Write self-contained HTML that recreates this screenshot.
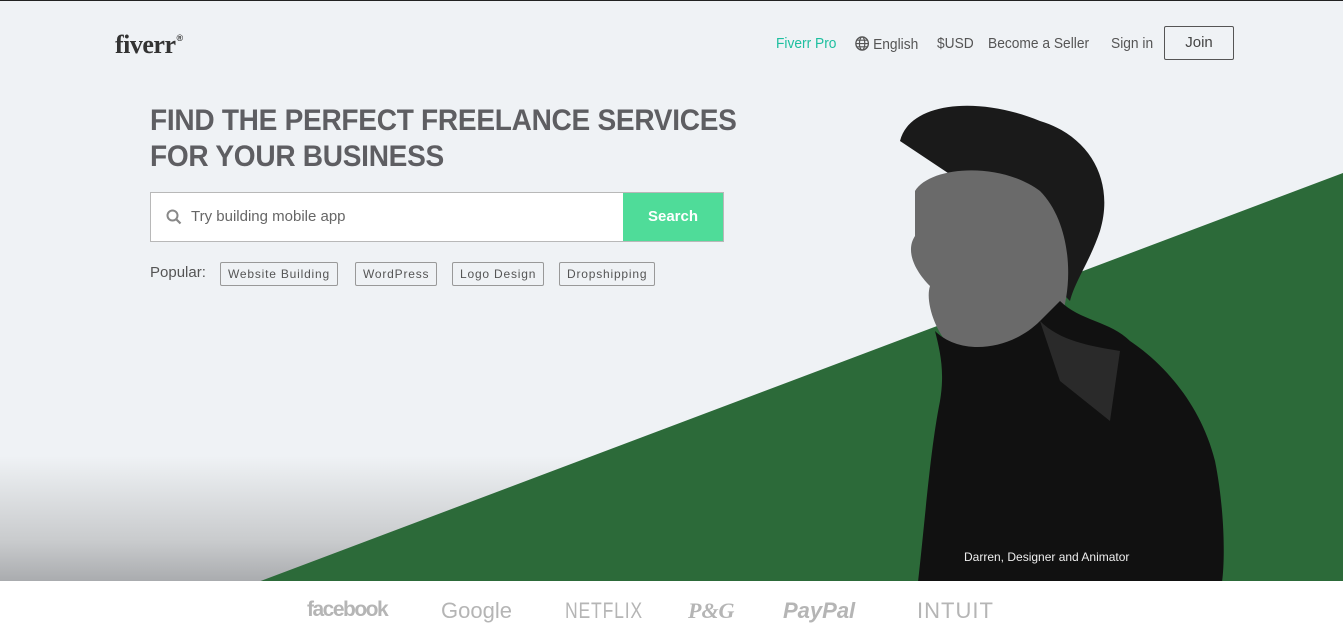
<!DOCTYPE html>
<html><head><meta charset="utf-8"><style>
*{margin:0;padding:0;box-sizing:border-box}
body{width:1343px;height:624px;overflow:hidden;font-family:"Liberation Sans",sans-serif;background:#fff}
.hero{position:absolute;left:0;top:0;width:1343px;height:581px;background:linear-gradient(#eff2f5 0,#eff2f5 455px,#c9cbcd 540px,#a9abae 581px);border-top:1px solid #222;overflow:hidden}
svg.bg{position:absolute;left:0;top:0}
.logo{position:absolute;left:115px;top:29px;font-family:"Liberation Serif",serif;font-weight:bold;font-size:26px;color:#333;letter-spacing:-0.5px}
.logo sup{font-size:9px;font-family:"Liberation Sans";vertical-align:12px;margin-left:1px}
.nav{position:absolute;top:35px;font-size:14.5px;color:#555;transform:scaleX(.95);transform-origin:left}
.join{position:absolute;left:1164px;top:25px;width:70px;height:34px;border:1px solid #555;border-radius:2px;font-size:15px;color:#444;text-align:center;line-height:32px}
h1{position:absolute;left:150px;top:102px;font-size:30px;line-height:36px;color:#5e5e62;font-weight:bold;letter-spacing:-0.3px;transform:scaleX(.935);transform-origin:left;white-space:nowrap}
.search{position:absolute;left:150px;top:191px;width:574px;height:50px;border:1px solid #b8b8b8;background:#fff}
.search span{position:absolute;left:40px;top:15px;font-size:15px;color:#666}
.btn{position:absolute;right:0;top:0;width:100px;height:48px;background:#4fdc99;color:#fff;font-weight:bold;font-size:15px;text-align:center;line-height:48px}
.pop{position:absolute;left:150px;top:263px;font-size:15px;color:#555}
.tag{position:absolute;top:261px;height:24px;border:1px solid #999;border-radius:2px;font-size:12px;color:#555;line-height:22px;padding:0 7px;letter-spacing:0.8px}
.cap{position:absolute;left:964px;top:549px;font-size:12px;color:#eee}
.brand{position:absolute;top:598px;font-size:22px;color:#b5b5b5;font-weight:bold;white-space:nowrap}
</style></head><body>
<div class="hero">
<svg class="bg" width="1343" height="581">
<polygon points="258,581 1343,172 1343,581" fill="#2c6a39"/>
<path d="M900,140 C910,100 980,95 1040,120 C1090,135 1115,180 1100,230 C1090,260 1075,280 1070,300 L1040,270 L960,180 Z" fill="#1a1a1a"/>
<path d="M915,190 C930,165 1000,160 1040,190 C1070,220 1075,280 1060,320 C1040,345 990,355 950,345 C935,330 925,300 930,285 C915,270 905,250 915,235 Z" fill="#6a6a6a"/>
<path d="M935,330 C960,355 1010,350 1040,320 L1060,300 C1080,320 1110,320 1130,340 C1160,360 1200,400 1215,460 C1225,510 1225,560 1222,581 L918,581 C925,520 930,450 940,400 C945,370 940,350 935,330 Z" fill="#111"/>
<path d="M1040,320 C1060,340 1090,345 1120,350 L1110,420 L1060,380 Z" fill="#2a2a2a"/>
</svg>
<div class="logo">fiverr<sup>®</sup></div>
<div class="nav" style="left:776px;color:#1dbf9f">Fiverr Pro</div>
<div class="nav" style="left:855px"><svg width="15" height="15" viewBox="0 0 16 16" style="vertical-align:-2px"><circle cx="8" cy="8" r="7" fill="none" stroke="#555" stroke-width="1.5"/><ellipse cx="8" cy="8" rx="3" ry="7" fill="none" stroke="#555" stroke-width="1.3"/><path d="M1 8H15M2.5 4.5H13.5M2.5 11.5H13.5" stroke="#555" stroke-width="1.2"/></svg> English</div>
<div class="nav" style="left:937px">$USD</div>
<div class="nav" style="left:988px">Become a Seller</div>
<div class="nav" style="left:1111px">Sign in</div>
<div class="join">Join</div>
<h1>FIND THE PERFECT FREELANCE SERVICES<br>FOR YOUR BUSINESS</h1>
<div class="search"><svg style="position:absolute;left:15px;top:16px" width="16" height="16" viewBox="0 0 16 16"><circle cx="6.5" cy="6.5" r="5" fill="none" stroke="#888" stroke-width="2"/><path d="M10 10L14.5 14.5" stroke="#888" stroke-width="2.2"/></svg><span>Try building mobile app</span><div class="btn">Search</div></div>
<div class="pop">Popular:</div>
<div class="tag" style="left:220px">Website Building</div>
<div class="tag" style="left:355px">WordPress</div>
<div class="tag" style="left:452px">Logo Design</div>
<div class="tag" style="left:559px">Dropshipping</div>
<div class="cap">Darren, Designer and Animator</div>
</div>
<div class="brand" style="left:307px;letter-spacing:-1.5px;font-size:21px">facebook</div>
<div class="brand" style="left:441px;font-weight:normal">Google</div>
<div class="brand" style="left:565px;font-weight:normal;letter-spacing:1px;transform:scaleX(.8);transform-origin:left">NETFLIX</div>
<div class="brand" style="left:688px;font-family:'Liberation Serif';font-style:italic">P&amp;G</div>
<div class="brand" style="left:783px;font-style:italic">PayPal</div>
<div class="brand" style="left:917px;font-weight:normal;letter-spacing:1px">INTUIT</div>
</body></html>
